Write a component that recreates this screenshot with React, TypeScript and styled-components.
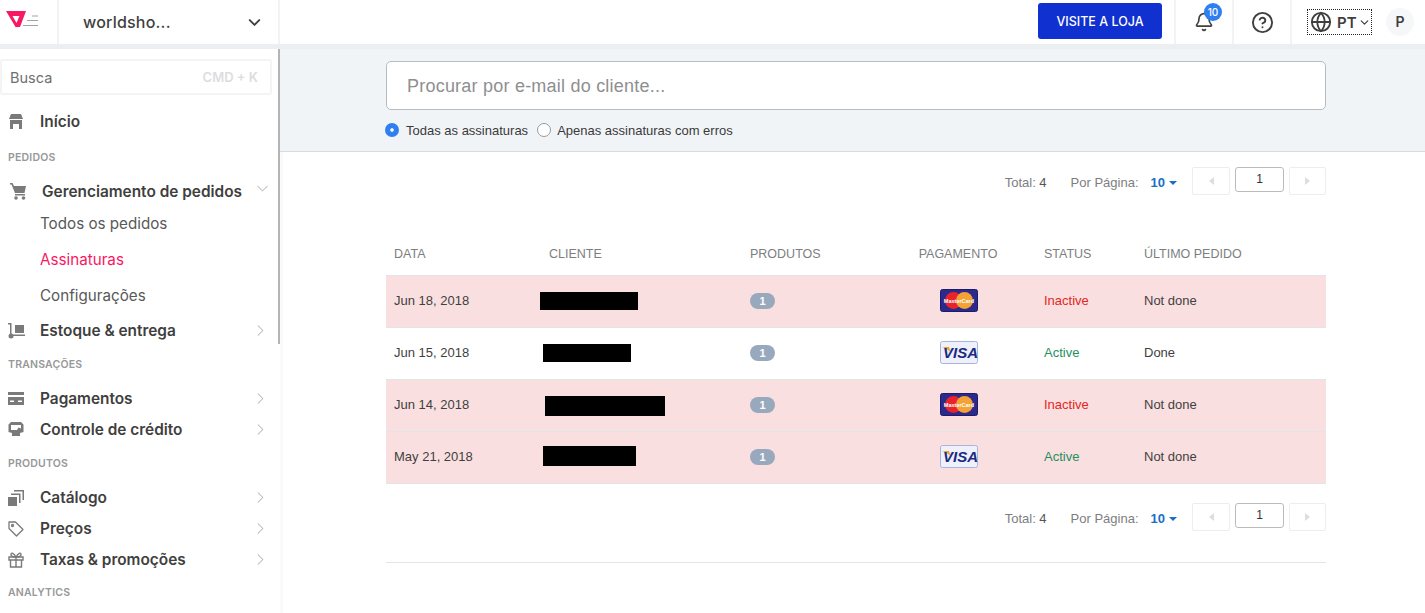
import React from "react";
import styled, { createGlobalStyle } from "styled-components";
import { Bell, ChevronDown, ChevronRight, CircleHelp, Globe } from "lucide-react";

const GlobalStyle = createGlobalStyle`
  html, body {
    margin: 0;
    padding: 0;
    background: #fff;
    overflow: hidden;
  }
  * {
    box-sizing: border-box;
  }
`;

const Logo = () => (
  <svg width="32" height="18" viewBox="0 0 32 18">
    <path d="M0 1H20L14 17H9.500Z" fill="#f71963" />
    <path d="M6.500 6H13.500L10.500 13Z" fill="#fff" />
    <path d="M26 5.500H32V6.500H26ZM21 10H32V11H21ZM17 15H32V16H17Z" fill="#a3a3a3" />
  </svg>
);

const HomeIcon = () => (
  <svg width="14" height="15" viewBox="0 0 14 15" fill="#7a7a7a">
    <path d="M2 0H12L14 5H0Z" />
    <path d="M1 6H13V15H10V10H4V15H1Z" />
  </svg>
);

const CartIcon = () => (
  <svg width="16" height="17" viewBox="0 0 16 17" fill="#7a7a7a">
    <path d="M0 0H2.500L4 3H16L14.500 10H5L1.500 1.500H0Z" />
    <rect x="5" y="11" width="10" height="1.500" />
    <circle cx="6" cy="15" r="1.800" />
    <circle cx="13.500" cy="15" r="1.800" />
  </svg>
);

const DollyIcon = () => (
  <svg width="17" height="16" viewBox="0 0 17 16" fill="#7a7a7a">
    <rect x="7" y="2" width="9" height="8" />
    <rect x="2" y="0" width="1.500" height="12" />
    <rect x="0" y="0" width="3" height="1.500" />
    <rect x="3" y="11.500" width="14" height="1.500" />
    <circle cx="3" cy="13" r="2.500" />
  </svg>
);

const CardIcon = () => (
  <svg width="16" height="13" viewBox="0 0 16 13" fill="#7a7a7a">
    <rect x="0" y="0" width="16" height="3" />
    <path d="M0 5H16V13H0ZM2 8.500V10H6V8.500ZM10 8.500V10H14V8.500Z" fillRule="evenodd" />
  </svg>
);

const CreditIcon = () => (
  <svg width="16" height="15" viewBox="0 0 16 15" fill="#7a7a7a">
    <path d="M3 0H13L15.500 2.500V10L12 11V14H4V11L0.500 10V2.500ZM3 3V8H9L10.500 5.500L13 6.500V3Z" fillRule="evenodd" />
  </svg>
);

const CatalogIcon = () => (
  <svg width="16" height="16" viewBox="0 0 16 16" fill="#7a7a7a">
    <rect x="0" y="7" width="9" height="9" />
    <path d="M3 5V3.500H12.500V13H11V5Z" />
    <path d="M6 1.500V0H16V10H14.500V1.500Z" />
  </svg>
);

const TagIcon = () => (
  <svg width="16" height="16" viewBox="0 0 16 16" fill="none" stroke="#7a7a7a" strokeWidth="1.300">
    <path d="M1 1H7.500L15 8.500L8.500 15L1 7.500Z" strokeLinejoin="round" />
    <circle cx="4.500" cy="4.500" r="1" />
  </svg>
);

const GiftIcon = () => (
  <svg width="16" height="16" viewBox="0 0 16 16" fill="none" stroke="#7a7a7a" strokeWidth="1.400">
    <path d="M1 5H15V8H1ZM2.500 8V15H13.500V8M8 5V15" />
    <path d="M8 5C6 1 3 0 3 2.500C3 4 5 5 8 5C11 5 13 4 13 2.500C13 0 10 1 8 5Z" />
  </svg>
);

const MasterCard = () => (
  <svg width="38" height="24" viewBox="0 0 38 24">
    <rect x="0.500" y="0.500" width="37" height="22" rx="2" fill="#2b2a8c" stroke="#1d1c66" />
    <circle cx="13.500" cy="11.500" r="8.500" fill="#e8232c" />
    <circle cx="24.500" cy="11.500" r="8.500" fill="#f4a235" />
    <text x="19" y="13.500" fontSize="5.500" fontFamily="Liberation Sans, sans-serif" fontWeight="700" fill="#fff" textAnchor="middle">
      MasterCard
    </text>
  </svg>
);

const VisaCard = () => (
  <svg width="38" height="24" viewBox="0 0 38 24">
    <rect x="0.500" y="0.500" width="37" height="22" rx="2" fill="#eef1fb" stroke="#a9b4dc" />
    <path d="M2 6H9L11 12C9 9 6 7 2 6Z" fill="#f0a11f" />
    <text x="20.500" y="17" fontSize="15" fontStyle="italic" fontWeight="700" fontFamily="Liberation Sans, sans-serif" fill="#1a2a80" textAnchor="middle">
      VISA
    </text>
  </svg>
);

type Order = {
  date: string;
  width: number;
  height: number;
  offset: number;
  drop: number;
  card: "master" | "visa";
  active: boolean;
  last: string;
  failed: boolean;
};

const orders: Order[] = [
  { date: "Jun 18, 2018", width: 98, height: 18, offset: 0, drop: 0, card: "master", active: false, last: "Not done", failed: true },
  { date: "Jun 15, 2018", width: 88, height: 18, offset: 3, drop: 0, card: "visa", active: true, last: "Done", failed: false },
  { date: "Jun 14, 2018", width: 120, height: 20, offset: 5, drop: 3, card: "master", active: false, last: "Not done", failed: true },
  { date: "May 21, 2018", width: 93, height: 20, offset: 3, drop: -2, card: "visa", active: true, last: "Not done", failed: true },
];

const Pagination = () => (
  <PagerRow>
    <PagerLabel>
      Total: <strong>4</strong>
    </PagerLabel>
    <PerPage>Por Página:</PerPage>
    <PerPageValue>10</PerPageValue>
    <Caret />
    <PagerButton>
      <PagerArrow />
    </PagerButton>
    <PagerInput>1</PagerInput>
    <PagerButton $narrow>
      <PagerArrow $right />
    </PagerButton>
  </PagerRow>
);

const App = () => {
  return (
    <Page>
      <GlobalStyle />
      <TopBar>
        <LogoCell>
          <Logo />
        </LogoCell>
        <StoreCell>
          <StoreName>worldsho...</StoreName>
          <ChevronDown size={19} strokeWidth={2.4} color="#3f3f40" />
        </StoreCell>
        <TopSpacer />
        <VisitButton>VISITE A LOJA</VisitButton>
        <IconCell>
          <Bell size={20} strokeWidth={2} color="#3f3f40" />
          <BellBadge>10</BellBadge>
        </IconCell>
        <IconCell>
          <CircleHelp size={23} strokeWidth={2} color="#3f3f40" />
        </IconCell>
        <LangCell>
          <LangBox>
            <Globe size={22} strokeWidth={2} color="#3f3f40" />
            <LangText>PT</LangText>
            <ChevronDown size={13} strokeWidth={2.2} color="#3f3f40" />
          </LangBox>
          <Avatar>P</Avatar>
        </LangCell>
      </TopBar>
      <Body>
        <Sidebar>
          <SearchBox>
            <span>Busca</span>
            <Shortcut>CMD + K</Shortcut>
          </SearchBox>
          <NavRow $top={11}>
            <NavIcon $left={1}>
              <HomeIcon />
            </NavIcon>
            <NavLabel>Início</NavLabel>
          </NavRow>
          <SectionTitle $top={2}>PEDIDOS</SectionTitle>
          <NavRow>
            <NavIcon $left={2}>
              <CartIcon />
            </NavIcon>
            <NavLabel $shift={2}>Gerenciamento de pedidos</NavLabel>
            <OpenChevron size={19} strokeWidth={1.3} color="#c4c5ca" />
          </NavRow>
          <SubList>
            <SubItem>Todos os pedidos</SubItem>
            <SubItem $active>Assinaturas</SubItem>
            <SubItem>Configurações</SubItem>
          </SubList>
          <NavRow>
            <NavIcon>
              <DollyIcon />
            </NavIcon>
            <NavLabel>Estoque &amp; entrega</NavLabel>
            <ChevronRight size={19} strokeWidth={1.3} color="#b5b6bb" />
          </NavRow>
          <SectionTitle>TRANSAÇÕES</SectionTitle>
          <NavRow>
            <NavIcon>
              <CardIcon />
            </NavIcon>
            <NavLabel>Pagamentos</NavLabel>
            <ChevronRight size={19} strokeWidth={1.3} color="#b5b6bb" />
          </NavRow>
          <NavRow>
            <NavIcon>
              <CreditIcon />
            </NavIcon>
            <NavLabel>Controle de crédito</NavLabel>
            <ChevronRight size={19} strokeWidth={1.3} color="#b5b6bb" />
          </NavRow>
          <SectionTitle>PRODUTOS</SectionTitle>
          <NavRow>
            <NavIcon>
              <CatalogIcon />
            </NavIcon>
            <NavLabel>Catálogo</NavLabel>
            <ChevronRight size={19} strokeWidth={1.3} color="#b5b6bb" />
          </NavRow>
          <NavRow>
            <NavIcon>
              <TagIcon />
            </NavIcon>
            <NavLabel>Preços</NavLabel>
            <ChevronRight size={19} strokeWidth={1.3} color="#b5b6bb" />
          </NavRow>
          <NavRow>
            <NavIcon>
              <GiftIcon />
            </NavIcon>
            <NavLabel>Taxas &amp; promoções</NavLabel>
            <ChevronRight size={19} strokeWidth={1.3} color="#b5b6bb" />
          </NavRow>
          <SectionTitle $last>ANALYTICS</SectionTitle>
          <ScrollThumb />
        </Sidebar>
        <Main>
          <FilterPanel>
            <FilterInner>
              <EmailInput>Procurar por e-mail do cliente...</EmailInput>
              <RadioRow>
                <RadioDot $checked />
                <RadioLabel>Todas as assinaturas</RadioLabel>
                <RadioDot />
                <RadioLabel>Apenas assinaturas com erros</RadioLabel>
              </RadioRow>
            </FilterInner>
          </FilterPanel>
          <Content>
            <Pagination />
            <HeadRow>
              <HeadCell>DATA</HeadCell>
              <HeadCell $left={17}>CLIENTE</HeadCell>
              <HeadCell>PRODUTOS</HeadCell>
              <HeadCell $center>PAGAMENTO</HeadCell>
              <HeadCell>STATUS</HeadCell>
              <HeadCell>ÚLTIMO PEDIDO</HeadCell>
            </HeadRow>
            {orders.map((o) => (
              <Row key={o.date} $failed={o.failed}>
                <Cell>{o.date}</Cell>
                <Cell>
                  <Redacted $w={o.width} $h={o.height} $offset={o.offset} $drop={o.drop} />
                </Cell>
                <Cell>
                  <CountBadge>1</CountBadge>
                </Cell>
                <Cell $center>{o.card === "master" ? <MasterCard /> : <VisaCard />}</Cell>
                <Cell>
                  <Status $active={o.active}>{o.active ? "Active" : "Inactive"}</Status>
                </Cell>
                <Cell>{o.last}</Cell>
              </Row>
            ))}
            <BottomPager>
              <Pagination />
            </BottomPager>
            <BottomRule />
          </Content>
        </Main>
      </Body>
    </Page>
  );
};

export default App;

const Page = styled.div`
  width: 1425px;
  height: 613px;
  overflow: hidden;
  font-family: "Liberation Sans", Arial, sans-serif;
  color: #3f3f40;
`;

const TopBar = styled.div`
  height: 49px;
  display: flex;
  align-items: stretch;
  background: #fff;
  border-bottom: 5px solid #eceff2;
  font-family: Inter, sans-serif;
`;

const LogoCell = styled.div`
  width: 59px;
  display: flex;
  align-items: center;
  padding: 0 0 6px 6px;
  border-right: 2px solid #f1f3f5;
`;

const StoreCell = styled.div`
  width: 221px;
  display: flex;
  align-items: center;
  justify-content: space-between;
  padding: 0 14px 0 24px;
  border-right: 2px solid #f1f3f5;
`;

const StoreName = styled.span`
  font-size: 16px;
  font-weight: 500;
  letter-spacing: 0.2px;
`;

const TopSpacer = styled.div`
  flex: 1;
`;

const VisitButton = styled.button`
  width: 124px;
  height: 36px;
  margin: 3px 12px 0 0;
  border: none;
  border-radius: 3px;
  background: #1130d0;
  color: #fff;
  font-family: Inter, sans-serif;
  font-size: 12.500px;
  font-weight: 500;
`;

const IconCell = styled.div`
  position: relative;
  width: 58px;
  display: flex;
  align-items: center;
  justify-content: center;
  border-left: 2px solid #f1f3f5;
`;

const BellBadge = styled.span`
  position: absolute;
  top: 3px;
  left: 28px;
  width: 18px;
  height: 18px;
  border-radius: 50%;
  background: #2f7ff0;
  color: #fff;
  font-size: 10px;
  font-weight: 500;
  line-height: 18px;
  text-align: center;
`;

const LangCell = styled.div`
  flex: 0 0 135px;
  display: flex;
  align-items: center;
  padding-left: 15px;
  border-left: 2px solid #f1f3f5;
`;

const LangBox = styled.div`
  width: 65px;
  height: 26px;
  display: flex;
  align-items: center;
  padding-left: 2px;
  border: 1px dotted #222;
`;

const LangText = styled.span`
  margin: 0 1px 0 5px;
  font-size: 15px;
  font-weight: 600;
`;

const Avatar = styled.div`
  width: 28px;
  height: 28px;
  margin-left: 14px;
  border-radius: 50%;
  background: #f6f7f9;
  text-align: center;
  line-height: 28px;
  font-size: 14px;
  font-weight: 600;
`;

const Body = styled.div`
  display: flex;
  height: 564px;
`;

const Sidebar = styled.aside`
  position: relative;
  width: 280px;
  flex: none;
  padding-top: 10px;
  background: #fff;
  font-family: Inter, sans-serif;
  overflow: hidden;
`;

const ScrollThumb = styled.div`
  position: absolute;
  top: -3px;
  right: 0;
  width: 2px;
  height: 298px;
  background: #b4b4b4;
`;

const SearchBox = styled.div`
  width: 272px;
  height: 36px;
  display: flex;
  align-items: center;
  justify-content: space-between;
  padding: 0 12px 0 8px;
  border: 2px solid #f3f4f6;
  border-radius: 3px;
  font-size: 14.500px;
  color: #6f6f70;
`;

const Shortcut = styled.span`
  font-size: 13px;
  font-weight: 600;
  color: #dcdde0;
`;

const NavRow = styled.div<{ $top?: number }>`
  height: 31px;
  display: flex;
  align-items: center;
  margin-top: ${(p) => p.$top || 0}px;
  padding: 0 10px 0 8px;
`;

const NavIcon = styled.span<{ $left?: number }>`
  width: 32px;
  flex: none;
  display: flex;
  align-items: center;
  padding-left: ${(p) => p.$left || 0}px;
`;

const NavLabel = styled.span<{ $shift?: number }>`
  flex: 1;
  margin-left: ${(p) => p.$shift || 0}px;
  font-size: 15.400px;
  font-weight: 600;
  color: #3f3f40;
  white-space: nowrap;
`;

const OpenChevron = styled(ChevronDown)`
  margin: 0 -2px 6px 0;
`;

const SectionTitle = styled.div<{ $top?: number; $last?: boolean }>`
  height: ${(p) => (p.$last ? 35 : 37)}px;
  margin-top: ${(p) => p.$top || 0}px;
  padding-left: 8px;
  font-size: 10.500px;
  font-weight: 600;
  line-height: ${(p) => (p.$last ? 35 : 37)}px;
  color: #979899;
  letter-spacing: 0.2px;
`;

const SubList = styled.div`
  margin: -1px 0 1px;
`;

const SubItem = styled.div<{ $active?: boolean }>`
  height: 36px;
  padding-left: 40px;
  font-size: 15.200px;
  line-height: 36px;
  color: ${(p) => (p.$active ? "#f71963" : "#585959")};
`;

const Main = styled.main`
  flex: 1;
  min-width: 0;
`;

const FilterPanel = styled.div`
  height: 103px;
  padding: 12px 0 0 106px;
  background: #f1f4f7;
  border-bottom: 1px solid #d9dde1;
`;

const FilterInner = styled.div`
  width: 940px;
`;

const EmailInput = styled.div`
  height: 49px;
  padding-left: 20px;
  border: 1px solid #b9bcbf;
  border-radius: 5px;
  background: #fff;
  color: #8e8f90;
  font-size: 18px;
  letter-spacing: 0.22px;
  line-height: 49px;
`;

const RadioRow = styled.div`
  display: flex;
  align-items: center;
  height: 16px;
  margin: 12px 0 0 -1px;
`;

const RadioDot = styled.span<{ $checked?: boolean }>`
  width: 14px;
  height: 14px;
  flex: none;
  border-radius: 50%;
  background: ${(p) => (p.$checked ? "#2f7ff0" : "#fff")};
  border: ${(p) => (p.$checked ? "5px solid #2f7ff0" : "1px solid #9a9a9a")};
  box-shadow: ${(p) => (p.$checked ? "inset 0 0 0 2px #fff" : "none")};
`;

const RadioLabel = styled.span`
  margin: 0 9px 0 7px;
  font-size: 13px;
  color: #3a3a3a;
  &:last-child {
    margin-left: 6px;
  }
`;

const Content = styled.div`
  height: 461px;
  padding: 15px 0 0 103px;
  border-left: 3px solid #fafafa;
`;

const PagerRow = styled.div`
  width: 940px;
  height: 28px;
  display: flex;
  align-items: center;
  justify-content: flex-end;
  font-size: 13px;
  color: #7d7e7f;
`;

const PagerLabel = styled.span`
  margin: 3px 24px 0 0;
  strong {
    font-weight: 400;
    color: #555;
  }
`;

const PerPage = styled.span`
  margin: 3px 12px 0 0;
`;

const PerPageValue = styled.span`
  margin-top: 3px;
  color: #1a6fc4;
  font-weight: 700;
`;

const Caret = styled.span`
  width: 0;
  height: 0;
  margin: 3px 15px 0 4px;
  border-left: 4px solid transparent;
  border-right: 4px solid transparent;
  border-top: 4px solid #1a6fc4;
`;

const PagerButton = styled.div<{ $narrow?: boolean }>`
  width: ${(p) => (p.$narrow ? 37 : 38)}px;
  height: 28px;
  display: flex;
  align-items: center;
  justify-content: center;
  border: 1px solid #eceded;
  border-radius: 2px;
  background: #fff;
`;

const PagerArrow = styled.span<{ $right?: boolean }>`
  width: 0;
  height: 0;
  border-top: 4px solid transparent;
  border-bottom: 4px solid transparent;
  border-left: ${(p) => (p.$right ? "5px solid #dcdddf" : "none")};
  border-right: ${(p) => (p.$right ? "none" : "5px solid #dcdddf")};
`;

const PagerInput = styled.div`
  width: 49px;
  height: 25px;
  margin: 0 5px 3px;
  border: 1px solid #b9bcbf;
  border-radius: 3px;
  background: #fff;
  color: #333;
  font-size: 12px;
  line-height: 22px;
  text-align: center;
`;

const tableColumns = "146px 210px 136px 158px 100px 190px";

const HeadRow = styled.div`
  width: 940px;
  display: grid;
  grid-template-columns: ${tableColumns};
  align-items: center;
  height: 81px;
  padding-top: 37px;
  border-bottom: 1px solid #e3e4e6;
`;

const HeadCell = styled.div<{ $left?: number; $center?: boolean }>`
  padding-left: ${(p) => (p.$center ? 2 : p.$left || 8)}px;
  text-align: ${(p) => (p.$center ? "center" : "left")};
  font-size: 12.500px;
  color: #7d7e7f;
`;

const Row = styled.div<{ $failed: boolean }>`
  width: 940px;
  display: grid;
  grid-template-columns: ${tableColumns};
  align-items: center;
  height: 52px;
  padding-bottom: 2px;
  background: ${(p) => (p.$failed ? "#fadfe0" : "#fff")};
  border-bottom: 1px solid #e3e4e6;
  font-size: 13px;
  color: #3f3f40;
`;

const Cell = styled.div<{ $center?: boolean }>`
  display: flex;
  align-items: center;
  justify-content: ${(p) => (p.$center ? "center" : "flex-start")};
  padding-left: ${(p) => (p.$center ? 4 : 8)}px;
`;

const Redacted = styled.div<{ $w: number; $h: number; $offset: number; $drop: number }>`
  width: ${(p) => p.$w}px;
  height: ${(p) => p.$h}px;
  margin-left: ${(p) => p.$offset}px;
  margin-top: ${(p) => Math.max(p.$drop, 0)}px;
  margin-bottom: ${(p) => Math.max(-p.$drop, 0)}px;
  background: #000;
`;

const CountBadge = styled.span`
  width: 25px;
  height: 16px;
  border-radius: 8px;
  background: #98a9bd;
  color: #fff;
  font-size: 11px;
  font-weight: 700;
  line-height: 16px;
  text-align: center;
`;

const Status = styled.span<{ $active: boolean }>`
  color: ${(p) => (p.$active ? "#1f8f5f" : "#e5261f")};
`;

const BottomPager = styled.div`
  margin-top: 19px;
`;

const BottomRule = styled.div`
  width: 940px;
  height: 1px;
  margin-top: 31px;
  background: #e3e4e6;
`;
